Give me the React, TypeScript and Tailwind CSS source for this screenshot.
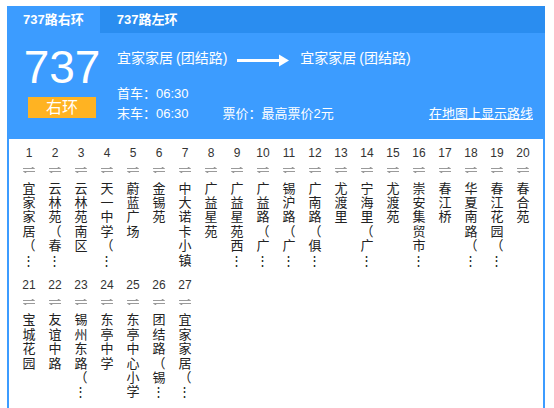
import React from 'react'

const stops = [
  '宜家家居（⋮', '云林苑（春⋮', '云林苑南区', '天一中学（⋮', '蔚蓝广场', '金锡苑', '中大诺卡小镇',
  '广益星苑', '广益星苑西⋮', '广益路（广⋮', '锡沪路（广⋮', '广南路（俱⋮', '尤渡里', '宁海里（广⋮',
  '尤渡苑', '崇安集贸市⋮', '春江桥', '华夏南路（⋮', '春江花园（⋮', '春合苑',
  '宝城花园', '友谊中路', '锡州东路（⋮', '东亭中学', '东亭中心小学', '团结路（锡⋮', '宜家家居（⋮',
]

function Swap() {
  return (
    <svg width="12" height="6" viewBox="0 0 12 6" className="mt-[6px] block">
      <path d="M0 1.5H11.5M11.5 1.5L8.5 0" stroke="#9a9a9a" strokeWidth="1" fill="none" />
      <path d="M0.5 4.5H12M0.5 4.5L3.5 6" stroke="#9a9a9a" strokeWidth="1" fill="none" />
    </svg>
  )
}

function RouteArrow() {
  return (
    <svg width="52" height="13" viewBox="0 0 52 13" className="ml-[10px] mt-[4px] shrink-0">
      <rect x="0" y="5" width="44" height="3" fill="#fff" />
      <path d="M42 0.5L52 6.5L42 12.5Z" fill="#fff" />
    </svg>
  )
}

export default function App() {
  return (
    <div className="min-h-[408px] bg-white pl-[7px] pt-[6px] font-['Liberation_Sans','Noto_Sans_CJK_SC',sans-serif]">
      <div className="w-[538px]">
        {/* Tabs */}
        <div className="flex h-[27px] bg-[#2a8df0] text-[13px] font-bold text-white">
          <div className="flex h-full items-center bg-[#3c9cff] px-4">737路右环</div>
          <div className="flex h-full items-center px-[17px]">737路左环</div>
        </div>

        {/* Header */}
        <div className="flex h-[106px] bg-[#3c9cff] pl-4 pr-3 pt-[11px] text-white">
          <div className="flex w-[78px] shrink-0 flex-col items-center">
            <div className="text-[46px] leading-[46px]">737</div>
            <div className="mt-[7px] flex h-[21px] w-[68px] items-center justify-center bg-[#ffb322] text-[16px] leading-none">
              右环
            </div>
          </div>
          <div className="ml-4 flex-1">
            <div className="mt-1 flex items-center text-[14px] leading-5">
              <span>宜家家居<span className="ml-[3px]">(</span>团结路)</span>
              <RouteArrow />
              <span className="ml-[11px]">宜家家居<span className="ml-[3px]">(</span>团结路)</span>
            </div>
            <div className="mt-4 text-[13px] leading-5">首车：06:30</div>
            <div className="flex text-[13px] leading-5">
              <span>末车：06:30</span>
              <span className="ml-[34px]">票价：最高票价2元</span>
              <a href="#" className="ml-auto underline">在地图上显示路线</a>
            </div>
          </div>
        </div>

        {/* Stops */}
        <div className="flex flex-wrap gap-y-[9px] border-x-2 border-[#3c9cff] bg-white pb-4 pl-[7px] pt-[6px]">
          {stops.map((name, i) => (
            <div key={i} className="flex w-[26px] flex-col items-center">
              <div className="h-4 text-[12px] leading-4 text-[#333]">{i + 1}</div>
              <Swap />
              <div className="mt-[8.5px] flex h-[86.4px] flex-col items-center text-[13px] leading-[14.4px] text-[#222]">
                {Array.from(name).map((ch, j) => (
                  <span key={j} className="block">{ch}</span>
                ))}
              </div>
            </div>
          ))}
        </div>
      </div>
    </div>
  )
}
